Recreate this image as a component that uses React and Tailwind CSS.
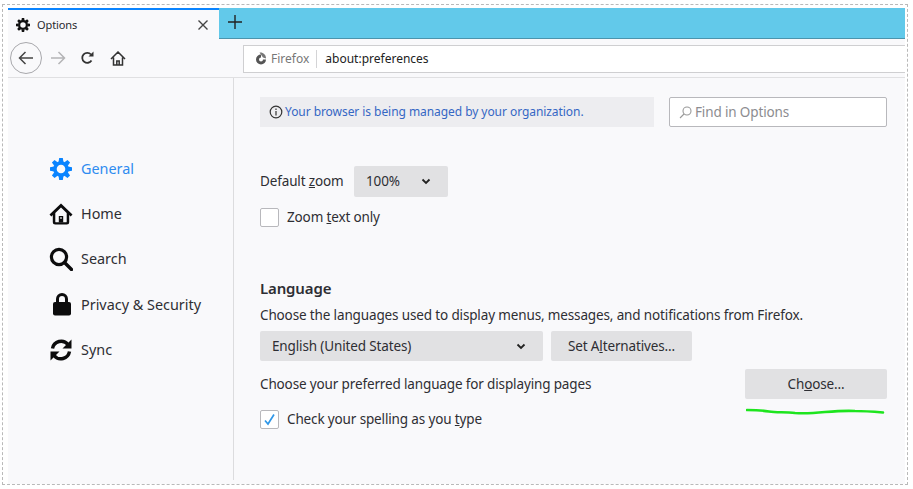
import React from "react";

const Gear = ({ size, color }) => (
  <svg width={size} height={size} viewBox="0 0 24 24" className="shrink-0">
    <circle cx="12" cy="12" r="6.6" fill="none" stroke={color} strokeWidth="3.8" />
    {[0, 45, 90, 135, 180, 225, 270, 315].map((a) => (
      <path key={a} d="M10 0h4l0.7 4.500h-5.400z" fill={color} transform={`rotate(${a} 12 12)`} />
    ))}
  </svg>
);
const HomeIcon = () => (
  <svg width="24" height="24" viewBox="0 0 24 24" className="shrink-0 -ml-[1px]">
    <path d="M12 1.500 0.500 12.500l1.900 1.900L3.800 13v7a2.500 2.500 0 0 0 2.500 2.500h11.400a2.500 2.500 0 0 0 2.500-2.500v-7l1.400 1.400 1.900-1.900z" fill="#0c0c0d" />
    <path d="M12 5.500 6.300 11v8.700a.6.6 0 0 0 .6.6h10.200a.6.6 0 0 0 .6-.6V11z" fill="#f9f9fb" />
    <rect x="9.800" y="14" width="4.400" height="6.500" fill="#0c0c0d" />
    <rect x="11.300" y="15.200" width="1.400" height="1.600" fill="#f9f9fb" />
  </svg>
);
const SearchIcon = () => (
  <svg width="24" height="24" viewBox="0 0 24 24" fill="none" stroke="#0c0c0d" className="shrink-0 -ml-[1px]">
    <circle cx="10" cy="10" r="7.600" strokeWidth="3.200" />
    <path d="M15.500 15.500 22.500 22.500" strokeWidth="3.400" strokeLinecap="round" />
  </svg>
);
const LockIcon = () => (
  <svg width="24" height="24" viewBox="0 0 24 24" className="shrink-0">
    <path d="M7.500 11V7a4.500 4.500 0 0 1 9 0v4" fill="none" stroke="#0c0c0d" strokeWidth="3" />
    <rect x="3" y="10" width="18" height="13.500" rx="2" fill="#0c0c0d" />
  </svg>
);
const SyncIcon = () => (
  <svg width="24" height="24" viewBox="0 0 24 24" fill="none" className="shrink-0 -ml-[1px]">
    <path d="M3.500 10.500A8.800 8.800 0 0 1 19 6.500" stroke="#0c0c0d" strokeWidth="3.400" />
    <path d="M22.500 1.500v9h-9z" fill="#0c0c0d" />
    <path d="M20.500 13.500A8.800 8.800 0 0 1 5 17.500" stroke="#0c0c0d" strokeWidth="3.400" />
    <path d="M1.500 22.500v-9h9z" fill="#0c0c0d" />
  </svg>
);
const Chevron = () => (
  <svg width="10" height="7" viewBox="0 0 10 7" fill="none" stroke="#222" strokeWidth="1.800" className="shrink-0">
    <path d="M1.500 1.500 5 5l3.500-3.500" />
  </svg>
);

const NavItem = ({ icon, label, active }) => (
  <div className={`flex h-[45.25px] items-center pl-[42px] text-[14.4px] ${active ? "text-[#2f8cf0]" : "text-[#2e2e33]"}`}>
    <span className="flex w-[31px] items-center">{icon}</span>
    <span>{label}</span>
  </div>
);

const Checkbox = ({ checked }) => (
  <span className="flex h-[19px] w-[19px] shrink-0 items-center justify-center rounded-[2px] border border-[#b8b8bc] bg-white">
    {checked && (
      <svg width="13" height="13" viewBox="0 0 13 13" fill="none" stroke="#2f97e8" strokeWidth="1.700">
        <path d="M2 7.500 5 11 11 1.500" />
      </svg>
    )}
  </span>
);

export default function App() {
  return (
    <div className="relative h-[489px] w-[913px] overflow-hidden bg-white pt-[4px] pl-[2px] text-[#2e2e33]" style={{ fontFamily: '"Noto Sans", sans-serif' }}>
      <div className="flex h-[481px] w-[906px] flex-col border border-dashed border-[#b9b9b9] pt-[3px] pl-[5px] pr-[2px]">
        <div className="flex h-[31px] shrink-0">
          <div className="flex w-[211px] items-center border-t-2 border-[#0a84ff] bg-[#f9f9fb] pl-[8px] pr-[7px] pt-[1px] text-[11px] text-[#2a2a2e]">
            <Gear size={14} color="#111" />
            <span className="ml-[7px] flex-1 tracking-[-0.1px]">Options</span>
            <svg width="10" height="10" viewBox="0 0 10 10" stroke="#444" strokeWidth="1.400" className="mr-[4px]"><path d="M.5.5l9 9M9.500.5l-9 9" /></svg>
          </div>
          <div className="flex flex-1 items-center border-b border-[#4b94ad] bg-[#62c9ea] pl-[9px]">
            <svg width="14" height="14" viewBox="0 0 14 14" stroke="#222" strokeWidth="1.400" className="mb-[2px]"><path d="M7 0v14M0 7h14" /></svg>
          </div>
        </div>
        <div className="flex h-[39px] shrink-0 items-center border-b border-[#e0e0e2] bg-[#f9f9fb]">
          <div className="ml-[2px] flex h-[32px] w-[32px] items-center justify-center rounded-full border border-[#a8a8ac] bg-[#f9f9fb]">
            <svg width="16" height="14" viewBox="0 0 16 14" fill="none" stroke="#444" strokeWidth="1.500"><path d="M15 7H1.500M7.500 1 1.500 7l6 6" /></svg>
          </div>
          <svg width="16" height="14" viewBox="0 0 16 14" fill="none" stroke="#b4b4b6" strokeWidth="1.500" className="ml-[8px]"><path d="M1 7h13.500M8.500 1l6 6-6 6" /></svg>
          <svg width="15" height="14" viewBox="0 0 15 14" fill="none" stroke="#333" strokeWidth="1.800" className="ml-[14px]"><path d="M11.500 9.500A5 5 0 1 1 11 3.500" /><path d="M13.500 0.500v5h-5z" fill="#333" stroke="none" /></svg>
          <svg width="16" height="15" viewBox="0 0 16 15" fill="none" stroke="#333" strokeWidth="1.500" className="ml-[15px]"><path d="M1 8l7-7 7 7M3.500 6.500v7.500h9V6.500M6.800 14v-4h2.400v4" /></svg>
          <div className="ml-[117px] mt-[1px] flex h-[28px] flex-1 items-center border border-[#cfcfd1] border-r-0 bg-white pt-[1px] text-[12px] text-[#222]">
            <svg width="14" height="14" viewBox="0 0 14 14" className="ml-[10px]"><path d="M7 2.500a5 5 0 1 0 5 5h-3a2 2 0 1 1-2-2z" fill="#555" /><path d="M5.500 0.500C9 0 12 2.500 12 6.500L9 5.500z" fill="#777" /></svg>
            <span className="ml-[3px] text-[#777]">Firefox</span>
            <span className="ml-[7px] mr-[8px] h-[18px] w-px bg-[#d4d4d6]" />
            <span>about:preferences</span>
          </div>
        </div>
        <div className="flex min-h-0 flex-1 bg-[#f9f9fb]">
          <div className="mb-[4px] w-[226px] shrink-0 border-r border-[#dcdcde] pt-[68px]">
            <NavItem active icon={<Gear size={22} color="#0a84ff" />} label="General" />
            <NavItem icon={<HomeIcon />} label="Home" />
            <NavItem icon={<SearchIcon />} label="Search" />
            <NavItem icon={<LockIcon />} label="Privacy & Security" />
            <NavItem icon={<SyncIcon />} label="Sync" />
          </div>
          <div className="flex flex-1 flex-col pl-[26px] pr-[18px] pt-[19px] text-[13.5px] tracking-[-0.14px]">
            <div className="flex h-[30px] shrink-0 justify-between">
              <div className="flex w-[394px] items-center bg-[#ededf0] pl-[9px] text-[12px] tracking-[-0.06px] text-[#3567c4]">
                <svg width="14" height="14" viewBox="0 0 14 14" fill="none" stroke="#333" strokeWidth="1.200" className="mr-[2px]"><circle cx="7" cy="7" r="5.800" /><path d="M7 6v4.500M7 3.500v1.500" /></svg>
                <span>Your browser is being managed by your organization.</span>
              </div>
              <div className="flex w-[218px] items-center rounded-[2px] border border-[#b8b8bc] bg-white pl-[9px] text-[13.5px] text-[#8c8c90]">
                <svg width="13" height="13" viewBox="0 0 13 13" fill="none" stroke="#999" strokeWidth="1.100" className="mr-[3px]"><circle cx="8" cy="5" r="4" /><path d="M5 8 1 12" /></svg>
                <span>Find in Options</span>
              </div>
            </div>
            <div className="mt-[39px] flex h-[31px] shrink-0 items-center">
              <span className="w-[94px]">Default <span className="underline">z</span>oom</span>
              <div className="flex h-[31px] w-[94px] items-center rounded-[2px] bg-[#e1e1e3] pl-[12px]">
                <span className="w-[55px]">100%</span>
                <Chevron />
              </div>
            </div>
            <div className="mt-[10px] flex items-center gap-[8px]">
              <Checkbox />
              <span>Zoom <span className="underline">t</span>ext only</span>
            </div>
            <div className="mt-[50px] text-[15px] font-semibold leading-[22px]">Language</div>
            <div className="mt-[5px] leading-[22px]">Choose the languages used to display menus, messages, and notifications from Firefox.</div>
            <div className="mt-[5px] flex h-[30px] shrink-0 gap-[8px]">
              <div className="flex w-[283px] items-center justify-between rounded-[2px] bg-[#e1e1e3] pl-[12px] pr-[17px]">
                <span>English (United States)</span>
                <Chevron />
              </div>
              <div className="flex w-[141px] items-center justify-center rounded-[2px] bg-[#e1e1e3]">Set A<span className="underline">l</span>ternatives...</div>
            </div>
            <div className="mt-[8px] flex h-[30px] shrink-0 items-center justify-between">
              <span>Choose your preferred language for displaying pages</span>
              <div className="flex h-[30px] w-[142px] items-center justify-center rounded-[2px] bg-[#e1e1e3]">Ch<span className="underline">o</span>ose...</div>
            </div>
            <div className="mt-[10px] flex items-center gap-[8px]">
              <Checkbox checked />
              <span>Check your spelling as you <span className="underline">t</span>ype</span>
            </div>
          </div>
        </div>
      </div>
      <svg width="140" height="8" viewBox="0 0 140 8" fill="none" className="absolute left-[746px] top-[407px]">
        <path d="M1 3c8 0 14 0 22 1.500s16 0 26 1.500c10 .8 20 0 30-1 10-.8 20-1.500 30-1 8 0 16 .5 28 1.500" stroke="#1ee51e" strokeWidth="2.600" strokeLinecap="round" />
      </svg>
    </div>
  );
}
